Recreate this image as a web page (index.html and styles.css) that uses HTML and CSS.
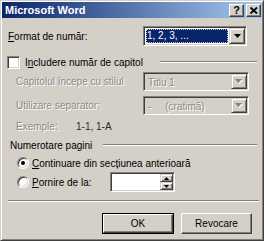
FILE: index.html
```html
<!DOCTYPE html>
<html>
<head>
<meta charset="utf-8">
<link rel="stylesheet" href="styles.css">
</head>
<body>
<div class="win">
  <div class="title">
    <span class="title-text">Microsoft Word</span>
    <div class="tbtns">
      <div class="tbtn help">?</div>
      <div class="tbtn close"><svg width="8" height="7" viewBox="0 0 8 7"><path d="M0.5 0.5 L7 6.5 M7 0.5 L0.5 6.5" stroke="#000" stroke-width="1.8" fill="none"/></svg></div>
    </div>
  </div>
  <div class="content">
    <div class="row r1">
      <span class="lbl"><u>F</u>ormat de număr:</span>
      <div class="combo c1">
        <div class="field"><span class="sel">1, 2, 3, ...</span></div>
        <div class="ddbtn"><svg width="7" height="4" viewBox="0 0 7 4"><path d="M0 0 H7 L3.5 4 Z" fill="#000"/></svg></div>
      </div>
    </div>
    <div class="row r2">
      <span class="check"></span>
      <span class="lbl chklbl">I<u>n</u>cludere număr de capitol</span>
      <span class="gline"></span>
    </div>
    <div class="row r3">
      <span class="lbl dis ind">Capitolul începe cu stilul</span>
      <div class="combo c2 disabled">
        <div class="field"><span class="val">Titlu 1</span></div>
        <div class="ddbtn"><svg width="8" height="5" viewBox="0 0 8 5"><path d="M1 1 H8 L4.5 5 Z" fill="#fff"/><path d="M0 0 H7 L3.5 4 Z" fill="#808080"/></svg></div>
      </div>
    </div>
    <div class="row r4">
      <span class="lbl dis ind">Utilizare separator:</span>
      <div class="combo c2 disabled">
        <div class="field"><span class="val">-&nbsp;&nbsp;&nbsp;&nbsp;&nbsp;(cratimă)</span></div>
        <div class="ddbtn"><svg width="8" height="5" viewBox="0 0 8 5"><path d="M1 1 H8 L4.5 5 Z" fill="#fff"/><path d="M0 0 H7 L3.5 4 Z" fill="#808080"/></svg></div>
      </div>
    </div>
    <div class="row r5">
      <span class="lbl dis ind ex">Exemple:</span>
      <span class="lbl exval">1-1, 1-A</span>
    </div>
    <div class="row r6">
      <span class="lbl grp">Numerotare pagini</span>
      <span class="gline"></span>
    </div>
    <div class="row r7">
      <span class="radio"><span class="dot"></span></span>
      <span class="lbl rlbl"><u>C</u>ontinuare din secțiunea anterioară</span>
    </div>
    <div class="row r8">
      <span class="radio"></span>
      <span class="lbl rlbl plbl"><u>P</u>ornire de la:</span>
      <div class="spin">
        <div class="spinfield"></div>
        <div class="spinbtns">
          <div class="sbtn"><svg width="5" height="3" viewBox="0 0 5 3"><path d="M2.5 0 L5 3 H0 Z" fill="#000"/></svg></div>
          <div class="sbtn"><svg width="5" height="3" viewBox="0 0 5 3"><path d="M0 0 H5 L2.5 3 Z" fill="#000"/></svg></div>
        </div>
      </div>
    </div>
    <div class="sep"></div>
    <div class="row btns">
      <div class="btn def"><div class="btn-in">OK</div></div>
      <div class="btn"><div class="btn-in">Revocare</div></div>
    </div>
  </div>
</div>
</body>
</html>
```
FILE: styles.css
```css
html, body {
  margin: 0;
  padding: 0;
  background: #d4d0c8;
}
.win {
  width: 264px;
  height: 241px;
  box-sizing: border-box;
  background: #d4d0c8;
  border: 1px solid;
  border-color: #d4d0c8 #404040 #404040 #d4d0c8;
  box-shadow: inset 1px 1px #fff, inset -1px -1px #808080;
  padding: 1px;
  font: 10px "Liberation Sans", Arial, sans-serif;
  color: #000;
  display: flex;
  flex-direction: column;
}
.title {
  height: 16px;
  background: linear-gradient(to right, #0a246a, #a6caf0);
  display: flex;
  align-items: center;
  padding: 0 1px 0 3px;
  color: #fff;
  font-weight: bold;
  font-size: 11px;
}
.title-text { flex: 1; }
.tbtns { display: flex; gap: 2px; }
.tbtn {
  width: 15px;
  height: 13px;
  box-sizing: border-box;
  background: #d4d0c8;
  border: 1px solid;
  border-color: #fff #404040 #404040 #fff;
  box-shadow: inset -1px -1px #808080;
  display: flex;
  align-items: center;
  justify-content: center;
  color: #000;
  font-size: 11px;
  font-weight: bold;
  line-height: 1;
}
.content {
  flex: 1;
  display: flex;
  flex-direction: column;
  padding: 0 5px 0 6px;
}
.row {
  display: flex;
  align-items: center;
}
.lbl { white-space: nowrap; }
.dis {
  color: #8c8a84;
  text-shadow: 1px 1px #fff;
}
.ind { margin-left: 8px; }
.r1 { height: 20px; margin-top: 8px; }
.r2 { height: 14px; margin-top: 9px; }
.r3 { height: 19px; margin-top: 3px; }
.r4 { height: 19px; margin-top: 5px; }
.r5 { height: 14px; margin-top: 4px; }
.r6 { height: 14px; margin-top: 5px; }
.r7 { height: 14px; margin-top: 4px; }
.r8 { height: 20px; margin-top: 2px; }

.combo {
  margin-left: auto;
  box-sizing: border-box;
  height: 100%;
  border: 1px solid;
  border-color: #808080 #fff #fff #808080;
  box-shadow: inset 1px 1px #404040, inset -1px -1px #d4d0c8;
  background: #fff;
  padding: 1px;
  display: flex;
}
.c1 { width: 104px; margin-right: 10px; }
.c2 { width: 106px; margin-right: 8px; }
.combo.disabled { background: #d4d0c8; }
.field {
  flex: 1;
  display: flex;
  padding: 1px;
  min-width: 0;
}
.sel {
  flex: 1;
  background: #0a246a;
  color: #fff;
  outline: 1px dotted #c8c8c8;
  outline-offset: -1px;
  padding-left: 1px;
  line-height: 14px;
}
.val {
  color: #8c8a84;
  text-shadow: 1px 1px #fff;
  padding-left: 2px;
  line-height: 15px;
}
.ddbtn {
  width: 16px;
  box-sizing: border-box;
  background: #d4d0c8;
  border: 1px solid;
  border-color: #d4d0c8 #404040 #404040 #d4d0c8;
  box-shadow: inset 1px 1px #fff, inset -1px -1px #808080;
  display: flex;
  align-items: center;
  justify-content: center;
}
.check {
  width: 13px;
  height: 13px;
  box-sizing: border-box;
  margin-left: -1px;
  border: 1px solid;
  border-color: #808080 #fff #fff #808080;
  box-shadow: inset 1px 1px #404040, inset -1px -1px #d4d0c8;
  background: #fff;
}
.chklbl { margin-left: 5px; width: 135px; }
.gline {
  flex: 1;
  height: 0;
  border-top: 1px solid #808080;
  border-bottom: 1px solid #fff;
}
.r2 .gline { margin-top: -1px; }
.ex { width: 60px; }
.exval { color: #2a2a2a; }
.grp { margin-left: 2px; width: 93px; }
.r6 .gline { margin-top: -1px; }
.radio {
  width: 12px;
  height: 12px;
  box-sizing: border-box;
  margin-left: 9px;
  border-radius: 50%;
  border: 1px solid;
  border-color: #808080 #fff #fff #808080;
  box-shadow: inset 1px 1px #404040, inset -1px -1px #d4d0c8;
  background: #fff;
  display: flex;
  align-items: center;
  justify-content: center;
}
.dot {
  width: 4px;
  height: 4px;
  border-radius: 50%;
  background: #000;
}
.rlbl { margin-left: 3px; }
.plbl { width: 78px; }
.spin {
  width: 65px;
  height: 20px;
  box-sizing: border-box;
  border: 1px solid;
  border-color: #808080 #fff #fff #808080;
  box-shadow: inset 1px 1px #404040, inset -1px -1px #d4d0c8;
  background: #fff;
  padding: 1px;
  display: flex;
}
.spinfield { flex: 1; }
.spinbtns {
  width: 13px;
  display: flex;
  flex-direction: column;
}
.sbtn {
  flex: 1;
  box-sizing: border-box;
  background: #d4d0c8;
  border: 1px solid;
  border-color: #d4d0c8 #404040 #404040 #d4d0c8;
  box-shadow: inset 1px 1px #fff, inset -1px -1px #808080;
  display: flex;
  align-items: center;
  justify-content: center;
}
.sep {
  height: 0;
  border-top: 1px solid #808080;
  border-bottom: 1px solid #fff;
  margin: 8px -2px 0 0;
}
.btns {
  margin-top: 11px;
  justify-content: flex-end;
  gap: 7px;
  margin-right: 5px;
}
.btn {
  width: 71px;
  height: 21px;
  box-sizing: border-box;
  border: 1px solid;
  border-color: #fff #404040 #404040 #fff;
  box-shadow: inset -1px -1px #808080;
  display: flex;
}
.btn.def {
  border: 1px solid #000;
  box-shadow: none;
  width: 72px;
}
.btn-in {
  flex: 1;
  display: flex;
  align-items: center;
  justify-content: center;
}
.btn.def .btn-in {
  border: 1px solid;
  border-color: #fff #404040 #404040 #fff;
  box-shadow: inset -1px -1px #808080;
}
```
